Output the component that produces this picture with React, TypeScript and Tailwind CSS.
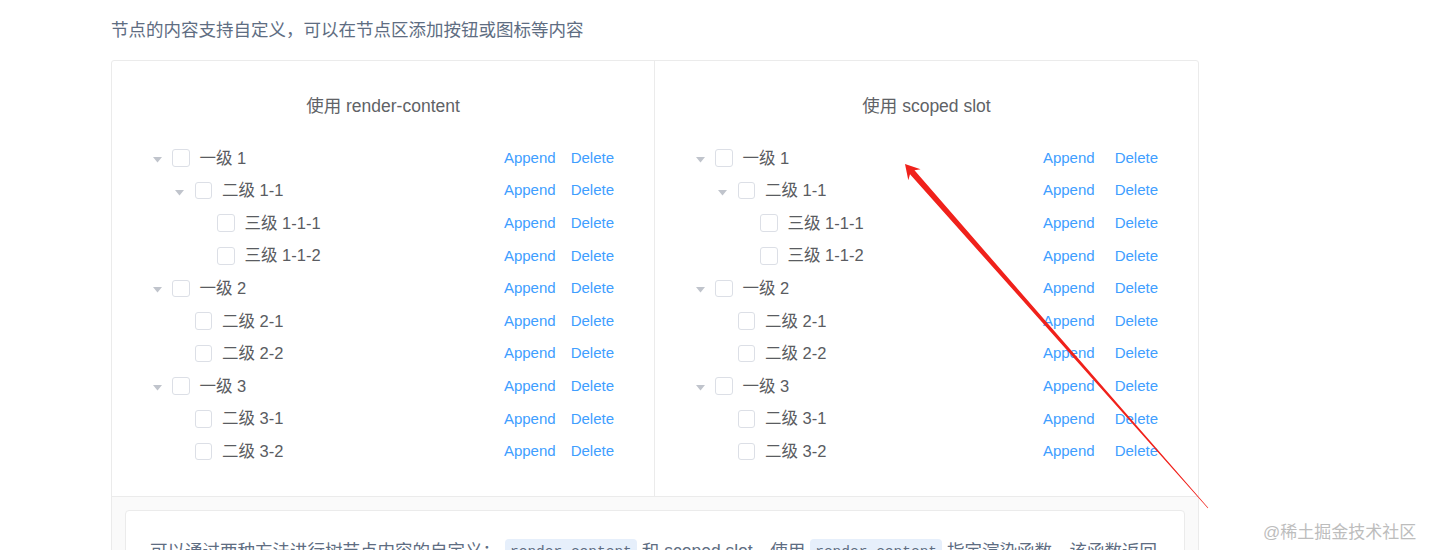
import React from 'react';

type Node = { label: string; level: number; leaf: boolean };

const nodes: Node[] = [
  { label: '一级 1', level: 1, leaf: false },
  { label: '二级 1-1', level: 2, leaf: false },
  { label: '三级 1-1-1', level: 3, leaf: true },
  { label: '三级 1-1-2', level: 3, leaf: true },
  { label: '一级 2', level: 1, leaf: false },
  { label: '二级 2-1', level: 2, leaf: true },
  { label: '二级 2-2', level: 2, leaf: true },
  { label: '一级 3', level: 1, leaf: false },
  { label: '二级 3-1', level: 2, leaf: true },
  { label: '二级 3-2', level: 2, leaf: true },
];

const indent: Record<number, string> = {
  1: 'pl-0',
  2: 'pl-[22.5px]',
  3: 'pl-[45px]',
};

const Tree = ({ gap }: { gap: string }) => (
  <div className="mt-[22.75px] pl-[30px] pr-[40px]">
    {nodes.map((n, i) => (
      <div key={i} className={`flex h-[32.6px] items-center ${indent[n.level]}`}>
        {/* expand icon, transparent for leaves */}
        <span className="flex h-full w-[30px] items-center justify-center pt-[4px]">
          {!n.leaf && (
            <svg width="9" height="6" viewBox="0 0 9 6">
              <path d="M0 0H9L4.5 5.5Z" fill="#c0c4cc" />
            </svg>
          )}
        </span>
        <span className="h-[17.5px] w-[17.5px] rounded-[3px] border border-[#dcdfe6] bg-white" />
        <span className="ml-[10px] flex-1 text-[16.5px] text-[#5a5c61]">{n.label}</span>
        <span className={`flex text-[15px] text-[#409eff] ${gap}`}>
          <span>Append</span>
          <span>Delete</span>
        </span>
      </div>
    ))}
  </div>
);

const Code = ({ children }: { children: string }) => (
  <code className="mx-[5px] inline-block h-[27px] rounded-[4px] bg-[#e6effb] px-[5px] align-middle font-['Liberation_Mono',monospace] text-[14.5px] leading-[27px] text-[#5e6d82]">
    {children}
  </code>
);

export default function App() {
  return (
    <div className="relative h-[550px] w-[1429px] overflow-hidden bg-white font-['Liberation_Sans','Noto_Sans_CJK_SC',sans-serif]">
      <div className="pl-[111px] pt-[17px]">
        <p className="text-[17.5px] leading-[26px] text-[#5e6d82]">
          节点的内容支持自定义，可以在节点区添加按钮或图标等内容
        </p>

        <div className="mt-[17px] w-[1088px] rounded-[3px] border border-[#ebebeb]">
          <div className="grid grid-cols-2">
            <div className="border-r border-[#ebebeb] pb-[28px] pt-[32px]">
              <h3 className="text-center text-[17.5px] leading-[26px] text-[#606266]">使用 render-content</h3>
              <Tree gap="gap-[15px]" />
            </div>
            <div className="pb-[28px] pt-[32px]">
              <h3 className="text-center text-[17.5px] leading-[26px] text-[#606266]">使用 scoped slot</h3>
              <Tree gap="gap-[20px]" />
            </div>
          </div>

          <div className="border-t border-[#ebebeb] bg-[#fafafa] px-[13px] pb-[20px] pt-[13px]">
            <div className="rounded-[4px] border border-[#ebebeb] bg-white px-[24px] pb-[20px] pt-[24px]">
              <p className="text-[17.5px] leading-[32px] text-[#5e6d82]">
                可以通过两种方法进行树节点内容的自定义：<Code>render-content</Code>和 scoped slot。使用<Code>render-content</Code>指定渲染函数，该函数返回需要的节点区内容即可。渲染函数的用法请参考 Vue 文档。使用 scoped slot 会传入两个参数
                <Code>node</Code>和<Code>data</Code>，分别表示当前节点的 Node 对象和当前节点的数据。
              </p>
            </div>
          </div>
        </div>
      </div>

      {/* annotation arrow */}
      <svg className="pointer-events-none absolute left-0 top-0" width="1429" height="550" viewBox="0 0 1429 550">
        <polygon
          points="905,164 920.6,169.3 914.5,170.3 1208.2,507.8 1207.8,508.2 910,174.2 908.3,180.2"
          fill="#f0211b"
        />
      </svg>

      {/* watermark */}
      <span className="pointer-events-none absolute left-[1263px] top-[520px] text-[17px] leading-[26px] text-[#bdbdbd]">
        @稀土掘金技术社区
      </span>
    </div>
  );
}
